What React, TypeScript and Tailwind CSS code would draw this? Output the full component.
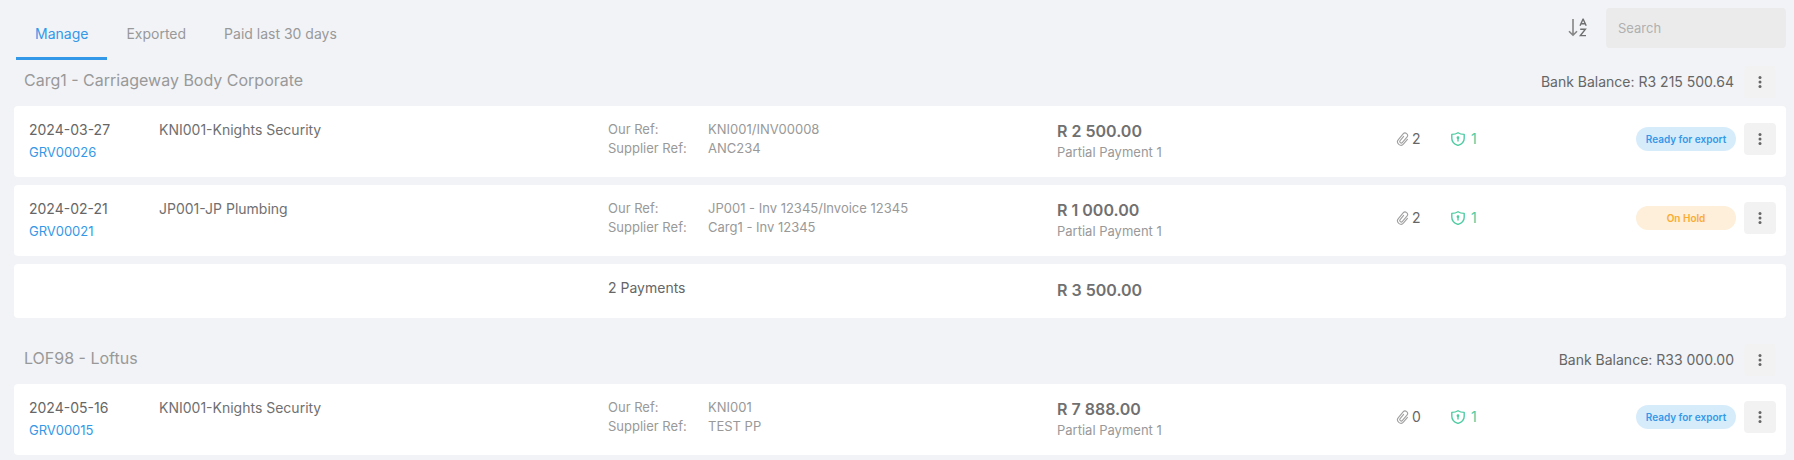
import React from 'react';

interface Payment {
    date: string;
    number: string;
    supplier: string;
    ourRef: string;
    supplierRef: string;
    amount: string;
    attachments: number;
    approvals: number;
    status: 'ready' | 'hold';
}

interface PaymentGroup {
    name: string;
    balance: string;
    payments: Payment[];
    total?: string;
}

const groups: PaymentGroup[] = [
    {
        name: 'Carg1 - Carriageway Body Corporate',
        balance: 'R3 215 500.64',
        total: 'R 3 500.00',
        payments: [
            {
                date: '2024-03-27',
                number: 'GRV00026',
                supplier: 'KNI001-Knights Security',
                ourRef: 'KNI001/INV00008',
                supplierRef: 'ANC234',
                amount: 'R 2 500.00',
                attachments: 2,
                approvals: 1,
                status: 'ready',
            },
            {
                date: '2024-02-21',
                number: 'GRV00021',
                supplier: 'JP001-JP Plumbing',
                ourRef: 'JP001 - Inv 12345/Invoice 12345',
                supplierRef: 'Carg1 - Inv 12345',
                amount: 'R 1 000.00',
                attachments: 2,
                approvals: 1,
                status: 'hold',
            },
        ],
    },
    {
        name: 'LOF98 - Loftus',
        balance: 'R33 000.00',
        payments: [
            {
                date: '2024-05-16',
                number: 'GRV00015',
                supplier: 'KNI001-Knights Security',
                ourRef: 'KNI001',
                supplierRef: 'TEST PP',
                amount: 'R 7 888.00',
                attachments: 0,
                approvals: 1,
                status: 'ready',
            },
        ],
    },
];

const tabs = ['Manage', 'Exported', 'Paid last 30 days'];

const rowGrid = 'grid grid-cols-[130px_1fr_1fr_1fr_270px] items-start rounded bg-white pl-[15px] pr-2.5 pt-3.5';

const SortIcon = () => (
    <svg width="20" height="20" viewBox="0 0 20 20" fill="none" stroke="#6f6f6f" strokeWidth="1.4">
        <path d="M5 1v16M1 13.2l4 4 4-4" stroke="#858585" strokeWidth="1.6" />
        <path d="M12 7.8 15 1.2h.2l3 6.6M13 5.8h4.2" />
        <path d="M12.2 11.3h5.2L12.4 17.6h5.6" />
    </svg>
);

const ClipIcon = () => (
    <svg width="14" height="14" viewBox="0 0 14 14" fill="none" stroke="#a0a0a0" strokeWidth="1.1" strokeLinecap="round">
        <path transform="rotate(40 7 7)" d="M10.6 4.4V10.4a3.4 3.4 0 0 1-6.8 0V3a2.5 2.5 0 0 1 5 0v7a1.5 1.5 0 0 1-3 0V4.6" />
    </svg>
);

const ShieldIcon = () => (
    <svg width="14" height="14" viewBox="0 0 14 14" fill="none" stroke="#4ecca3" strokeWidth="1.4" strokeLinejoin="round">
        <path d="M7 .7C5.3 1.9 3.2 2.4.8 2.4v3.8C.8 9.8 3.4 12.2 7 13.4c3.6-1.2 6.2-3.6 6.2-7.2V2.4C10.8 2.4 8.7 1.9 7 .7z" />
        <circle cx="7" cy="5.7" r="1.4" fill="#4ecca3" stroke="none" />
        <path d="M7 6v3" strokeLinecap="round" />
    </svg>
);

const MenuButton: React.FC<{ label: string }> = ({ label }) => (
    <button type="button" aria-label={label} className="flex size-8 shrink-0 items-center justify-center rounded bg-[#f2f2f2]">
        <svg width="4" height="14" viewBox="0 0 4 14" fill="#666666">
            <circle cx="2" cy="2.6" r="1.5" />
            <circle cx="2" cy="7" r="1.5" />
            <circle cx="2" cy="11.4" r="1.5" />
        </svg>
    </button>
);

const StatusBadge: React.FC<{ status: Payment['status'] }> = ({ status }) => {
    const color = status === 'ready' ? 'bg-[#d7ecfb] text-[#3498e8]' : 'bg-[#fdefd9] text-[#fbab30]';
    return (
        <span className={`flex h-6 w-[100px] items-center justify-center rounded-full text-[10px] font-semibold ${color}`}>
            {status === 'ready' ? 'Ready for export' : 'On Hold'}
        </span>
    );
};

const PaymentRow: React.FC<{ payment: Payment }> = ({ payment }) => (
    <div className={`${rowGrid} pb-[13px]`}>
        <div>
            <div className="leading-5">{payment.date}</div>
            <a href="#" className="block text-[13px] leading-6 text-[#3498e8]">{payment.number}</a>
        </div>
        <div className="leading-5 text-[#707070]">{payment.supplier}</div>
        <dl className="grid grid-cols-[100px_1fr] text-[13px] leading-[19px] text-[#999999]">
            <dt>Our Ref:</dt>
            <dd>{payment.ourRef}</dd>
            <dt>Supplier Ref:</dt>
            <dd>{payment.supplierRef}</dd>
        </dl>
        <div className="flex justify-between">
            <div>
                <div className="text-base leading-[22px] font-semibold text-[#707070]">{payment.amount}</div>
                <div className="text-[13px] leading-5 text-[#999999]">Partial Payment 1</div>
            </div>
            <div className="flex h-[38px] w-[110px] items-center">
                <span className="flex w-[55px] items-center gap-0.5"><ClipIcon />{payment.attachments}</span>
                <span className="flex items-center gap-1.5 text-[#4ecca3]"><ShieldIcon />{payment.approvals}</span>
            </div>
        </div>
        <div className="flex h-[38px] items-center justify-end gap-2">
            <StatusBadge status={payment.status} />
            <MenuButton label="Payment actions" />
        </div>
    </div>
);

const Group: React.FC<{ group: PaymentGroup }> = ({ group }) => (
    <section>
        <header className="mb-2 flex items-start justify-between pl-2.5 pr-2.5">
            <h2 className="text-base leading-7 text-[#999999]">{group.name}</h2>
            <div className="flex items-center gap-2.5">
                <span>Bank Balance: {group.balance}</span>
                <MenuButton label="Account actions" />
            </div>
        </header>
        <div className="flex flex-col gap-2">
            {group.payments.map((payment) => (
                <PaymentRow key={payment.number} payment={payment} />
            ))}
            {group.total && (
                <div className={`${rowGrid} pb-4`}>
                    <div className="col-start-3 leading-5">{group.payments.length} Payments</div>
                    <div className="text-base font-semibold text-[#707070]">{group.total}</div>
                </div>
            )}
        </div>
    </section>
);

export default function App() {
    const [active, setActive] = React.useState('Manage');

    return (
        <main className="min-h-screen bg-[#f1f3f7] pb-2 pl-3.5 pr-2 pt-2 font-['Inter',sans-serif] text-sm text-[#666666]">
            <div className="mb-1.5 flex items-start justify-between">
                <nav className="flex pl-0.5">
                    {tabs.map((tab) => (
                        <button
                            key={tab}
                            type="button"
                            onClick={() => setActive(tab)}
                            className={`h-[52px] border-b-[3px] px-[19px] pt-0.5 ${tab === active ? 'border-[#3498e8] text-[#3498e8]' : 'border-transparent text-[#999999]'}`}
                        >
                            {tab}
                        </button>
                    ))}
                </nav>
                <div className="flex items-center gap-[18px]">
                    <button type="button" aria-label="Sort"><SortIcon /></button>
                    <input
                        type="search"
                        aria-label="Search"
                        placeholder="Search"
                        className="h-10 w-[180px] rounded bg-[#ebebeb] px-3 text-[13px] placeholder:text-[#b0b0b0] focus:outline-none"
                    />
                </div>
            </div>
            <div className="flex flex-col gap-[26px]">
                {groups.map((group) => (
                    <Group key={group.name} group={group} />
                ))}
            </div>
        </main>
    );
}
